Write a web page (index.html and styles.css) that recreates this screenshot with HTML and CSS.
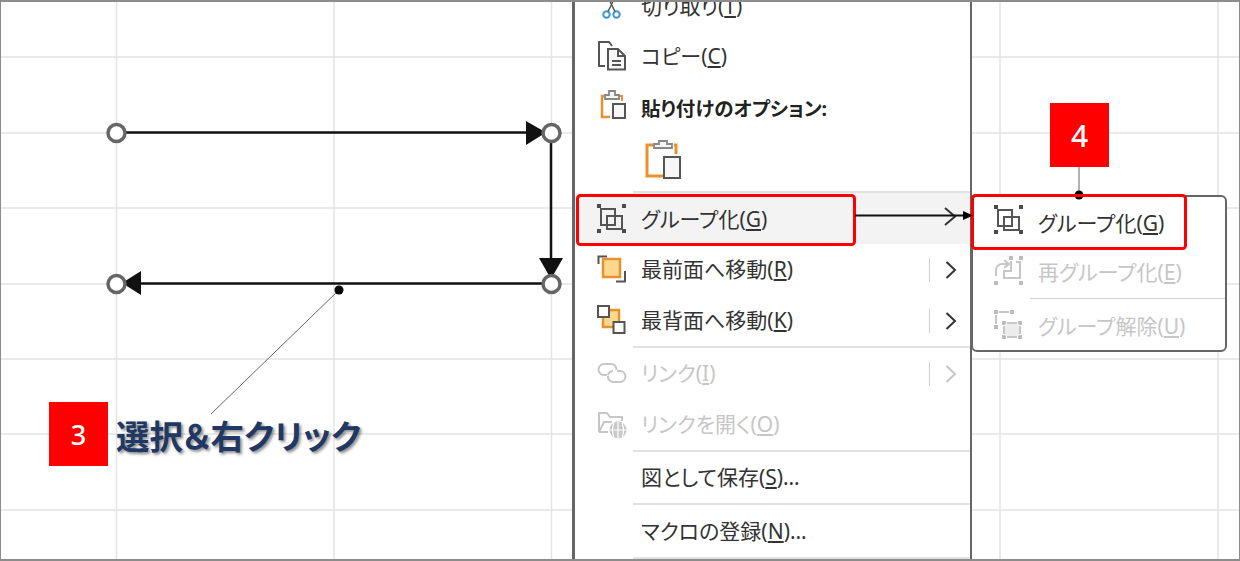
FILE: index.html
```html
<!DOCTYPE html>
<html lang="ja">
<head>
<meta charset="utf-8">
<title>グループ化</title>
<link rel="stylesheet" href="styles.css">
</head>
<body>
<main class="canvas">
  <svg class="layer" viewBox="0 0 1240 561" aria-hidden="true">
    <g class="grid">
      <path d="M0 57H1240M0 133H1240M0 208H1240M0 284H1240M0 359H1240M0 434H1240M0 510H1240"/>
      <path d="M116.500 0V561M334 0V561M551.500 0V561M1000 0V561M1218 0V561"/>
    </g>
    <g class="shape">
      <path class="conn" d="M122 132.500H530M551 140V262M544 283.500H136"/>
      <path class="head" d="M526 121L546 132.500L526 145Z"/>
      <path class="head" d="M539 258H563L551 279Z"/>
      <path class="head" d="M141 271L122 283L141 295Z"/>
      <circle class="handle" cx="116.500" cy="133" r="8.500"/>
      <circle class="handle" cx="551.500" cy="133" r="8.500"/>
      <circle class="handle" cx="116.500" cy="284" r="8.500"/>
      <circle class="handle" cx="551.500" cy="284" r="8.500"/>
    </g>
  </svg>

  <div class="caption">選択＆右クリック</div>

  <nav class="menu">
    <div class="item item-cut">
      <svg class="ico" viewBox="0 0 30 30"><g class="blue"><circle cx="9.500" cy="23.500" r="3.200"/><circle cx="19.500" cy="23.500" r="3.200"/></g><path class="dk thin" d="M11 20.500L16.500 9.500M18 20.500L12.500 9.500"/></svg>
      <span>切り取り(<u>T</u>)</span>
    </div>
    <div class="item item-copy">
      <svg class="ico" viewBox="0 0 30 30"><path class="dk" d="M8 25H2V1H12L15 5"/><path class="dk pale" d="M11 8H21L28 15V28.500H11Z"/><path class="dk" d="M21 8V15H28M15 20H24M15 24H24"/></svg>
      <span>コピー(<u>C</u>)</span>
    </div>
    <div class="item item-head">
      <svg class="ico" viewBox="0 0 30 30"><path class="or" d="M8 6H5V27H13"/><path class="or thin" d="M22 6H25V11"/><path class="gr" d="M8 9V5H12V1H18V5H22V9Z"/><rect class="dk pale" x="16" y="14" width="12" height="14"/></svg>
      <strong>貼り付けのオプション:</strong>
    </div>
    <div class="item item-paste">
      <svg class="ico-big" viewBox="0 0 36 40"><path class="or big" d="M9 6H2V37H18M29 6H31V15"/><path class="gr" d="M9 9V5H14V2H22V5H27V9Z"/><rect class="dk pale" x="19" y="18" width="16" height="21"/></svg>
    </div>
    <div class="sep"></div>
    <div class="item item-hi">
      <svg class="ico" viewBox="0 0 30 30"><use href="#ic-group"/></svg>
      <span>グループ化(<u>G</u>)</span>
    </div>
    <div class="item">
      <svg class="ico" viewBox="0 0 30 30"><path class="dk" d="M1.500 9V1.500H10M28 16V26.500H19"/><rect x="6" y="4" width="17" height="18" fill="#fad98f" stroke="#e8912d" stroke-width="2.500"/></svg>
      <span class="lift">最前面へ移動(<u>R</u>)</span>
      <span class="more"><svg viewBox="0 0 12 20"><path d="M1.500 2L10 10L1.500 18"/></svg></span>
    </div>
    <div class="item">
      <svg class="ico" viewBox="0 0 30 30"><rect x="6" y="4" width="16" height="17" fill="#fad98f" stroke="#e8912d" stroke-width="2.500"/><rect class="dk white" x="1" y="0" width="11" height="11"/><rect class="dk white" x="16.500" y="16" width="11" height="11"/></svg>
      <span class="lift">最背面へ移動(<u>K</u>)</span>
      <span class="more"><svg viewBox="0 0 12 20"><path d="M1.500 2L10 10L1.500 18"/></svg></span>
    </div>
    <div class="sep"></div>
    <div class="item off">
      <svg class="ico" viewBox="0 0 30 30"><path class="lt" d="M10 16H7A5.500 5.500 0 0 1 7 5H14A5.500 5.500 0 0 1 19.500 11"/><path class="lt" d="M11 16A5.500 5.500 0 0 1 16 12M20 12H23A5.500 5.500 0 0 1 23 23H16A5.500 5.500 0 0 1 11 17"/></svg>
      <span class="lift">リンク(<u>I</u>)</span>
      <span class="more off-more"><svg viewBox="0 0 12 20"><path d="M1.500 2L10 10L1.500 18"/></svg></span>
    </div>
    <div class="item off">
      <svg class="ico" viewBox="0 0 30 30"><path class="lt" d="M2 22V3H10L13 7H25V11M2 22H11M2 22L7 12H15"/><circle cx="21" cy="20" r="8.500" fill="#c8c8c8"/><path d="M12.500 20H29.500M21 11.500V28.500M17 13C15 18 15 23 17 27M25 13C27 18 27 23 25 27" fill="none" stroke="#fff" stroke-width="1.200"/></svg>
      <span class="lift">リンクを開く(<u>O</u>)</span>
    </div>
    <div class="sep"></div>
    <div class="item item-plain"><span class="lift">図として保存(<u>S</u>)…</span></div>
    <div class="sep"></div>
    <div class="item item-plain item-macro"><span>マクロの登録(<u>N</u>)…</span></div>
    <div class="sep"></div>
  </nav>

  <nav class="submenu">
    <div class="subitem subitem-first">
      <svg class="ico ico-up" viewBox="0 0 30 30"><use href="#ic-group"/></svg>
      <span>グループ化(<u>G</u>)</span>
    </div>
    <div class="subitem off">
      <svg class="ico ico-up" viewBox="0 0 30 30"><g class="dots-lt"><rect x="15" y="0" width="4" height="4"/><rect x="25" y="0" width="4" height="4"/><rect x="0" y="25" width="4" height="4"/><rect x="25" y="25" width="4" height="4"/></g><path class="lt" d="M2 20V14A6 6 0 0 1 8 8H14M10 4L15 8L10 12M17 5V15H10V22H26V6H22"/></svg>
      <span class="lift-more">再グループ化(<u>E</u>)</span>
    </div>
    <div class="subsep"></div>
    <div class="subitem off">
      <svg class="ico" viewBox="0 0 30 30"><g class="dots-lt"><rect x="0" y="0" width="4" height="4"/><rect x="16" y="0" width="4" height="4"/><rect x="0" y="15" width="4" height="4"/><rect x="8" y="11" width="4" height="4"/><rect x="24" y="11" width="4" height="4"/><rect x="8" y="25" width="4" height="4"/><rect x="24" y="25" width="4" height="4"/></g><path class="lt" d="M5 2H15M2 5V14"/><rect x="11" y="14" width="14" height="12" fill="#ececec"/><path class="lt" d="M13 13H23M10 16V24M26 16V24M13 27H23"/></svg>
      <span class="drop">グループ解除(<u>U</u>)</span>
    </div>
  </nav>

  <div class="badge badge-three">3</div>
  <div class="badge badge-four">4</div>

  <svg class="layer" viewBox="0 0 1240 561" aria-hidden="true">
    <defs>
      <g id="ic-group">
        <g fill="#4a4a4a"><rect x="0" y="0" width="4" height="4"/><rect x="25" y="0" width="4" height="4"/><rect x="0" y="25" width="4" height="4"/><rect x="25" y="25" width="4" height="4"/></g>
        <path d="M4 5H18V21H4ZM10 12H25V25H10Z" fill="none" stroke="#555" stroke-width="2"/>
      </g>
    </defs>
    <path class="leader" d="M339 290L211 414"/>
    <circle cx="339" cy="290" r="4.500"/>
    <path class="leader" d="M1079 167V195"/>
    <circle cx="1079" cy="195" r="4.500"/>
    <rect class="redbox" x="577.500" y="195.500" width="277" height="49" rx="3"/>
    <rect class="redbox" x="972.500" y="195.500" width="213" height="53" rx="3"/>
    <path class="chev" d="M945 208L955 216.500L945 225"/>
    <path class="link-line" d="M855 215.500H964"/>
    <path d="M963 211L973 215.500L963 220Z"/>
  </svg>
</main>
</body>
</html>
```
FILE: styles.css
```css
* { box-sizing: border-box; }
html, body { margin: 0; padding: 0; background: #fff; }
.canvas {
  position: relative;
  width: 1240px;
  height: 561px;
  overflow: hidden;
  background: #fff;
  font-family: "Noto Sans", "Noto Sans CJK JP", sans-serif;
  font-feature-settings: "palt";
  color: #333;
}
.canvas::after {
  content: "";
  position: absolute;
  inset: 0;
  border: 1px solid #8c8c8c;
  border-top-width: 2px;
  border-bottom-width: 2px;
  pointer-events: none;
}
.layer { position: absolute; left: 0; top: 0; width: 1240px; height: 561px; pointer-events: none; }
.grid path { fill: none; stroke: #e4e4e4; stroke-width: 1.500; }
.conn { fill: none; stroke: #111; stroke-width: 2.500; }
.head { fill: #111; }
.handle { fill: #fff; stroke: #666; stroke-width: 3.500; }
.leader { fill: none; stroke: #666; stroke-width: 1; }
.redbox { fill: none; stroke: #f00; stroke-width: 3; }
.chev { fill: none; stroke: #333; stroke-width: 2; }
.link-line { fill: none; stroke: #111; stroke-width: 2; }

.caption {
  position: absolute;
  left: 116px;
  top: 414px;
  font-size: 33.500px;
  line-height: 44px;
  font-weight: 700;
  white-space: nowrap;
  color: #1f3864;
  text-shadow: 2px 2px 3px rgba(0, 0, 0, .45);
}
.badge {
  position: absolute;
  display: flex;
  align-items: center;
  justify-content: center;
  width: 59px;
  height: 64px;
  background: #f00;
  color: #fff;
  font-size: 27px;
  font-weight: 500;
}
.badge-three { left: 49px; top: 402px; }
.badge-four { left: 1050px; top: 103px; font-size: 30px; }

.menu {
  position: absolute;
  left: 572px;
  top: -20px;
  width: 400px;
  background: #fff;
  border-left: 3px solid #666;
  border-right: 2px solid #666;
  padding-bottom: 4px;
}
.item {
  display: flex;
  align-items: center;
  height: 51px;
  padding-left: 22px;
  font-size: 21px;
  line-height: 28px;
  white-space: nowrap;
}
.item-cut { height: 51px; }
.item-copy { height: 50px; }
.item-head { height: 56px; }
.item-head .ico { margin-top: -8px; }
.item-head strong { font-size: 19.500px; font-weight: 700; color: #222; }
.item-paste { height: 54px; padding-left: 70px; }
.item-hi { background: #f3f3f3; }
.item-plain { height: 51px; padding-left: 66px; }
.item-macro { height: 52px; }
.ico { flex: none; width: 30px; height: 30px; margin-right: 14px; overflow: visible; }
.ico-up { margin-top: -6px; }
.ico-big { width: 36px; height: 40px; margin-top: -10px; }
.lift { margin-bottom: 2px; }
.lift-more { margin-bottom: 4px; }
.drop { margin-top: 2px; }
.off { color: #c6c6c6; }
.off u { text-decoration-color: #c6c6c6; }
.sep { height: 2px; margin-left: 58px; background: #e2e2e2; }
.more {
  display: flex;
  align-items: center;
  margin-left: auto;
  width: 41px;
  height: 24px;
  padding-left: 15px;
  border-left: 1px solid #cfcfcf;
}
.more svg { width: 12px; height: 20px; fill: none; stroke: #333; stroke-width: 2; }
.off-more svg { stroke: #c6c6c6; }

.submenu {
  position: absolute;
  left: 971px;
  top: 195px;
  width: 256px;
  height: 157px;
  background: #fff;
  border: 2px solid #666;
  border-radius: 6px;
}
.subitem {
  display: flex;
  align-items: center;
  height: 51px;
  padding-left: 21px;
  font-size: 21px;
  line-height: 28px;
  white-space: nowrap;
}
.subitem-first { height: 52px; }
.subitem:nth-child(2) { height: 49px; }
.subsep { height: 1px; margin-left: 57px; background: #d4d4d4; }

.dk { fill: none; stroke: #555; stroke-width: 2; }
.dk.thin { stroke-width: 1.500; }
.pale { fill: #f7f7f7; }
.white { fill: #fbfbfb; }
.or { fill: none; stroke: #e8912d; stroke-width: 2.500; }
.or.thin { stroke-width: 2; }
.or.big { stroke-width: 3; }
.gr { fill: #f5f5f5; stroke: #888; stroke-width: 1.800; }
.blue circle { fill: none; stroke: #3a96dd; stroke-width: 2; }
.lt { fill: none; stroke: #c6c6c6; stroke-width: 2; }
.dots-lt rect { fill: #bcbcbc; }
```
